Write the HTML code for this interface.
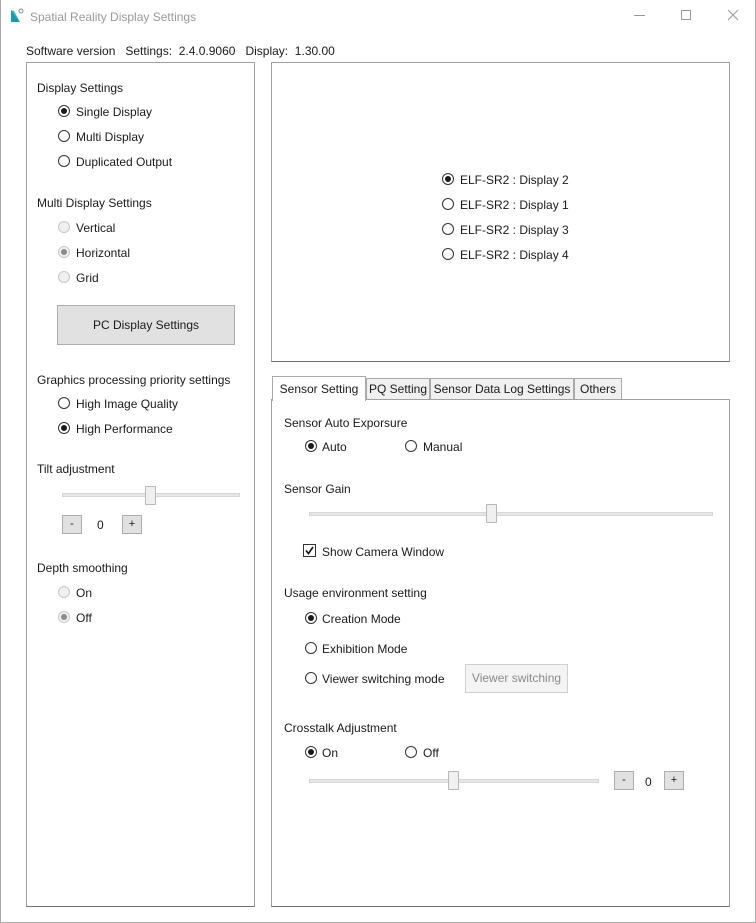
<!DOCTYPE html>
<html><head><meta charset="utf-8"><style>
*{box-sizing:border-box;margin:0;padding:0}
body{width:756px;height:923px;background:#fff;position:relative;overflow:hidden;font-family:"Liberation Sans",sans-serif;color:#1a1a1a}
.a{position:absolute}
.t{position:absolute;font-size:12px;line-height:16px;white-space:nowrap;margin-top:1px}
.r{position:absolute;width:12px;height:12px;border:1px solid #333;border-radius:50%;background:#fff}
.r.c::after{content:"";position:absolute;left:2px;top:2px;width:6px;height:6px;border-radius:50%;background:#1a1a1a}
.r.d{border-color:#c8c8c8;background:#f0f0f0}
.r.d.c::after{background:#8a8a8a}
.box{position:absolute;border:1px solid #a0a0a0;border-bottom:1px solid #707070}
.btn{position:absolute;background:#e1e1e1;border:1px solid #adadad;font-size:12px;text-align:center}
.track{position:absolute;height:4px;background:#e7e7e7;border:1px solid #d6d6d6}
.thumb{position:absolute;width:11px;height:19px;background:#f0f0f0;border:1px solid #b8b8b8;border-radius:1px}
.tab{position:absolute;top:378px;height:21px;border:1px solid #aaa;border-bottom:none;background:#f0f0f0;font-size:12px;line-height:20px;text-align:center}
</style></head><body>
<div class="a" style="left:0;top:0;width:756px;height:923px;border:1px solid #aaa;border-top:none"></div>
<svg class="a" style="left:9px;top:8px" width="16" height="16" viewBox="0 0 16 16"><polygon points="2,2 2,14 11,14" fill="#1a9ab0"/><polygon points="2,2 11,14 5,3" fill="#2bb8c8"/><circle cx="12" cy="3" r="2" fill="none" stroke="#888" stroke-width="1"/></svg>
<div class="t" style="left:30px;top:8px;color:#999">Spatial Reality Display Settings</div>
<div class="a" style="left:634px;top:15px;width:11px;height:1px;background:#999"></div>
<div class="a" style="left:681px;top:10px;width:10px;height:10px;border:1px solid #999"></div>
<svg class="a" style="left:727px;top:9px" width="12" height="12"><path d="M1 1L11 11M11 1L1 11" stroke="#999" stroke-width="1"/></svg>

<div class="t" style="left:26px;top:42px">Software version&nbsp;&nbsp; Settings:&nbsp; 2.4.0.9060&nbsp;&nbsp; Display:&nbsp; 1.30.00</div>

<div class="box" style="left:26px;top:62px;width:229px;height:845px"></div>
<div class="box" style="left:271px;top:62px;width:459px;height:300px"></div>
<div class="box" style="left:271px;top:399px;width:459px;height:508px"></div>

<div class="t" style="left:37px;top:79px">Display Settings</div>
<div class="r c" style="left:58px;top:105px"></div><div class="t" style="left:76px;top:103px">Single Display</div>
<div class="r" style="left:58px;top:130px"></div><div class="t" style="left:76px;top:128px">Multi Display</div>
<div class="r" style="left:58px;top:155px"></div><div class="t" style="left:76px;top:153px">Duplicated Output</div>
<div class="t" style="left:37px;top:194px">Multi Display Settings</div>
<div class="r d" style="left:58px;top:221px"></div><div class="t" style="left:76px;top:219px">Vertical</div>
<div class="r d c" style="left:58px;top:246px"></div><div class="t" style="left:76px;top:244px">Horizontal</div>
<div class="r d" style="left:58px;top:271px"></div><div class="t" style="left:76px;top:269px">Grid</div>
<div class="btn" style="left:57px;top:305px;width:178px;height:40px;line-height:38px">PC Display Settings</div>
<div class="t" style="left:37px;top:371px">Graphics processing priority settings</div>
<div class="r" style="left:58px;top:397px"></div><div class="t" style="left:76px;top:395px">High Image Quality</div>
<div class="r c" style="left:58px;top:422px"></div><div class="t" style="left:76px;top:420px">High Performance</div>
<div class="t" style="left:37px;top:460px">Tilt adjustment</div>
<div class="track" style="left:62px;top:493px;width:178px"></div>
<div class="thumb" style="left:145px;top:486px"></div>
<div class="btn" style="left:62px;top:515px;width:20px;height:19px;font-size:11px;line-height:17px">-</div>
<div class="t" style="left:97px;top:516px">0</div>
<div class="btn" style="left:122px;top:515px;width:20px;height:19px;font-size:11px;line-height:17px">+</div>
<div class="t" style="left:37px;top:559px">Depth smoothing</div>
<div class="r d" style="left:58px;top:586px"></div><div class="t" style="left:76px;top:584px">On</div>
<div class="r d c" style="left:58px;top:611px"></div><div class="t" style="left:76px;top:609px">Off</div>

<div class="r c" style="left:442px;top:173px"></div><div class="t" style="left:460px;top:171px">ELF-SR2 : Display 2</div>
<div class="r" style="left:442px;top:198px"></div><div class="t" style="left:460px;top:196px">ELF-SR2 : Display 1</div>
<div class="r" style="left:442px;top:223px"></div><div class="t" style="left:460px;top:221px">ELF-SR2 : Display 3</div>
<div class="r" style="left:442px;top:248px"></div><div class="t" style="left:460px;top:246px">ELF-SR2 : Display 4</div>

<div class="tab" style="left:366px;width:64px">PQ Setting</div>
<div class="tab" style="left:430px;width:144px">Sensor Data Log Settings</div>
<div class="tab" style="left:574px;width:48px">Others</div>
<div class="tab" style="left:272px;top:376px;width:94px;height:25px;background:#fff;line-height:24px">Sensor Setting</div>

<div class="t" style="left:284px;top:414px">Sensor Auto Exporsure</div>
<div class="r c" style="left:305px;top:440px"></div><div class="t" style="left:322px;top:438px">Auto</div>
<div class="r" style="left:405px;top:440px"></div><div class="t" style="left:423px;top:438px">Manual</div>
<div class="t" style="left:284px;top:480px">Sensor Gain</div>
<div class="track" style="left:309px;top:512px;width:404px"></div>
<div class="thumb" style="left:486px;top:504px"></div>
<div class="a" style="left:303px;top:544px;width:13px;height:13px;border:1px solid #333"></div>
<svg class="a" style="left:303px;top:544px" width="13" height="13"><path d="M3 6.5L5.5 9.5L10 3" fill="none" stroke="#111" stroke-width="1.6"/></svg>
<div class="t" style="left:322px;top:543px">Show Camera Window</div>
<div class="t" style="left:284px;top:584px">Usage environment setting</div>
<div class="r c" style="left:305px;top:612px"></div><div class="t" style="left:322px;top:610px">Creation Mode</div>
<div class="r" style="left:305px;top:642px"></div><div class="t" style="left:322px;top:640px">Exhibition Mode</div>
<div class="r" style="left:305px;top:672px"></div><div class="t" style="left:322px;top:670px">Viewer switching mode</div>
<div class="btn" style="left:465px;top:664px;width:103px;height:29px;line-height:27px;background:#f4f4f4;border-color:#cfcfcf;color:#8a8a8a">Viewer switching</div>
<div class="t" style="left:284px;top:719px">Crosstalk Adjustment</div>
<div class="r c" style="left:305px;top:746px"></div><div class="t" style="left:322px;top:744px">On</div>
<div class="r" style="left:405px;top:746px"></div><div class="t" style="left:423px;top:744px">Off</div>
<div class="track" style="left:309px;top:779px;width:290px"></div>
<div class="thumb" style="left:448px;top:771px"></div>
<div class="btn" style="left:614px;top:771px;width:20px;height:19px;font-size:11px;line-height:17px">-</div>
<div class="t" style="left:645px;top:773px">0</div>
<div class="btn" style="left:664px;top:771px;width:20px;height:19px;font-size:11px;line-height:17px">+</div>
</body></html>
